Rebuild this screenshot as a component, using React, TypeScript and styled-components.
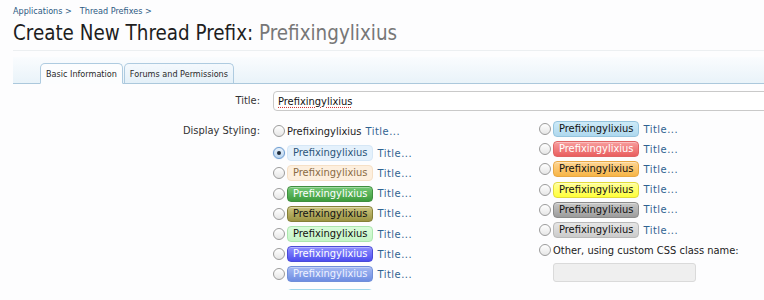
import React from "react";
import styled, { createGlobalStyle, css } from "styled-components";

const FONT = `"DejaVu Sans Condensed", "DejaVu Sans", "Liberation Sans", sans-serif`;

const GlobalStyle = createGlobalStyle`
  html, body { margin: 0; padding: 0; background: #fdfdfe; }
  body { font-family: ${FONT}; color: #222; overflow: hidden; }
`;

const Page = styled.div`
  padding-left: 13px;
  width: 751px;
  height: 290px;
  overflow: hidden;
`;

const Breadcrumb = styled.div`
  display: flex;
  gap: 8px;
  padding-top: 5px;
  height: 12px;
  line-height: 12px;
  font-size: 9px;
  color: #2d5a82;
`;

const Heading = styled.h1`
  margin: 4px 0 0;
  padding-bottom: 5px;
  font-size: 20.4px;
  line-height: 24px;
  font-weight: normal;
  color: #1e1e1e;
  border-bottom: 1px solid #eceff1;
`;

const Muted = styled.span`
  color: #777;
`;

const TabBar = styled.div`
  margin-top: 6px;
  height: 26px;
  padding-left: 27px;
  display: flex;
  align-items: flex-end;
  gap: 1px;
  background: linear-gradient(to bottom, #fafcfe, #e9f3f9);
  border-bottom: 1px solid #abc8dc;
`;

const Tab = styled.div<{ $active?: boolean }>`
  box-sizing: border-box;
  height: 21px;
  margin-bottom: -1px;
  padding: 0 5px;
  font-size: 9px;
  line-height: 20px;
  color: #2a2a2a;
  border: 1px solid #aecbe0;
  border-radius: 5px 5px 0 0;
  ${(p) =>
    p.$active
      ? css`
          background: #fcfdfe;
          border-bottom-color: #fcfdfe;
        `
      : css`
          background: linear-gradient(to bottom, #f4f9fd, #e4f0f8);
          border-bottom-color: #abc8dc;
        `}
`;

const FormGrid = styled.div`
  display: grid;
  grid-template-columns: 247px 1fr;
  column-gap: 13px;
  margin-top: 7px;
  row-gap: 7px;
`;

const Label = styled.div<{ $pad?: number }>`
  text-align: right;
  font-size: 11px;
  color: #333;
  line-height: 20px;
  padding-top: ${(p) => p.$pad ?? 0}px;
`;

const TextInput = styled.input`
  box-sizing: border-box;
  width: calc(100% + 20px);
  height: 20px;
  margin: 0;
  padding: 0 4px;
  font-family: ${FONT};
  font-size: 11px;
  color: #111;
  background: #fff;
  border: 1px solid #c9c9c9;
  border-radius: 4px 0 0 4px;
  text-decoration: underline dotted #d23a3a;
  text-underline-offset: 2px;
  outline: none;
`;

const Options = styled.div`
  display: grid;
  grid-template-columns: 266px 1fr;
`;

const Column = styled.div<{ $top: number }>`
  display: flex;
  flex-direction: column;
  padding-top: ${(p) => p.$top}px;
`;

const Row = styled.div<{ $gapAfter?: number; $gapBefore?: number }>`
  display: flex;
  align-items: center;
  height: 20.2px;
  font-size: 11px;
  white-space: nowrap;
  margin-top: ${(p) => p.$gapBefore ?? 0}px;
  margin-bottom: ${(p) => p.$gapAfter ?? 0}px;
`;

const Radio = styled.span<{ $checked?: boolean }>`
  position: relative;
  flex: none;
  box-sizing: border-box;
  width: 12px;
  height: 12px;
  margin-right: 2px;
  border-radius: 50%;
  border: 1px solid #9c9c9c;
  background: linear-gradient(to bottom, #ffffff, #e6e6e6);
  ${(p) =>
    p.$checked &&
    css`
      border-color: #6b9bd0;
      background: linear-gradient(to bottom, #e9f2fb, #bcd6f0);
      box-shadow: 0 0 1px #8cb4e0;
      &::after {
        content: "";
        position: absolute;
        left: 3px;
        top: 3px;
        width: 4px;
        height: 4px;
        border-radius: 50%;
        background: #1f2c3c;
      }
    `}
`;

const Plain = styled.span`
  color: #222;
`;

type Look = { bg: string; border: string; color: string; gloss?: boolean };

const Badge = styled.span<{ $look: Look }>`
  display: inline-block;
  box-sizing: border-box;
  height: 16px;
  line-height: 14px;
  padding: 0 5px;
  border-radius: 4px;
  border: 1px solid ${(p) => p.$look.border};
  color: ${(p) => p.$look.color};
  background: ${(p) => p.$look.bg};
  ${(p) =>
    p.$look.gloss &&
    css`
      box-shadow: inset 0 1px 0 rgba(255, 255, 255, 0.35);
    `}
`;

const TitleLink = styled.span`
  margin-left: 4px;
  letter-spacing: 0.5px;
  color: #2f6391;
`;

const OtherInput = styled.div`
  box-sizing: border-box;
  width: 143px;
  height: 19px;
  margin: 3px 0 0 14px;
  background: #efefef;
  border: 1px solid #dadada;
  border-radius: 3px;
`;

const g = (top: string, bottom: string) => `linear-gradient(to bottom, ${top}, ${bottom})`;

const looks: Record<string, Look> = {
  primary: { bg: "#e4f1fc", border: "#d6e7f6", color: "#2b5478" },
  secondary: { bg: "#fdefde", border: "#f6e0c6", color: "#8a6b45" },
  green: { bg: g("#74c874", "#3d9c3d"), border: "#3f8f3f", color: "#ffffff", gloss: true },
  olive: { bg: g("#cbc47e", "#9b9342"), border: "#858037", color: "#111", gloss: true },
  lightGreen: { bg: g("#d9fcda", "#c4f4c6"), border: "#ace6ae", color: "#111" },
  blue: { bg: g("#8f8fff", "#4d4ef0"), border: "#4a4ad8", color: "#ffffff", gloss: true },
  royal: { bg: g("#a5b9f3", "#6e8de2"), border: "#718fd9", color: "#eef2ff", gloss: true },
  cyan: { bg: g("#d8f1fa", "#bfe6f4"), border: "#9fd8ec", color: "#111" },
  sky: { bg: g("#cdeaf8", "#aed8ee"), border: "#95c4de", color: "#111" },
  red: { bg: g("#f89e9e", "#e95f5f"), border: "#e06464", color: "#ffffff", gloss: true },
  orange: { bg: g("#fdd593", "#f7b546"), border: "#e9a843", color: "#111", gloss: true },
  yellow: { bg: g("#ffff9a", "#ffff3a"), border: "#e2db3a", color: "#111", gloss: true },
  gray: { bg: g("#c8c8c8", "#9c9c9c"), border: "#8b8b8b", color: "#111", gloss: true },
  silver: { bg: g("#e6e6e6", "#cbcbcb"), border: "#b9b9b9", color: "#111" },
};

const NAME = "Prefixingylixius";

const leftKeys = ["primary", "secondary", "green", "olive", "lightGreen", "blue", "royal"];
const rightKeys = ["sky", "red", "orange", "yellow", "gray", "silver"];

function BadgeRow({ k, checked, gapBefore }: { k: string; checked?: boolean; gapBefore?: number }) {
  return (
    <Row $gapBefore={gapBefore}>
      <Radio $checked={checked} />
      <Badge $look={looks[k]}>{NAME}</Badge>
      <TitleLink>Title...</TitleLink>
    </Row>
  );
}

export default function App() {
  return (
    <>
      <GlobalStyle />
      <Page>
        <Breadcrumb>
          <span>Applications &gt;</span>
          <span>Thread Prefixes &gt;</span>
        </Breadcrumb>
        <Heading>
          Create New Thread Prefix: <Muted>{NAME}</Muted>
        </Heading>
        <TabBar>
          <Tab $active>Basic Information</Tab>
          <Tab>Forums and Permissions</Tab>
        </TabBar>
        <FormGrid>
          <Label>Title:</Label>
          <TextInput readOnly value={NAME} />
          <Label $pad={3}>Display Styling:</Label>
          <Options>
            <Column $top={3}>
              <Row $gapAfter={2}>
                <Radio />
                <Plain>{NAME}</Plain>
                <TitleLink>Title...</TitleLink>
              </Row>
              {leftKeys.map((k, i) => (
                <BadgeRow key={k} k={k} checked={i === 0} />
              ))}
              <BadgeRow k="cyan" gapBefore={2} />
            </Column>
            <Column $top={1}>
              {rightKeys.map((k) => (
                <BadgeRow key={k} k={k} />
              ))}
              <Row>
                <Radio />
                <Plain>Other, using custom CSS class name:</Plain>
              </Row>
              <OtherInput />
            </Column>
          </Options>
        </FormGrid>
      </Page>
    </>
  );
}
